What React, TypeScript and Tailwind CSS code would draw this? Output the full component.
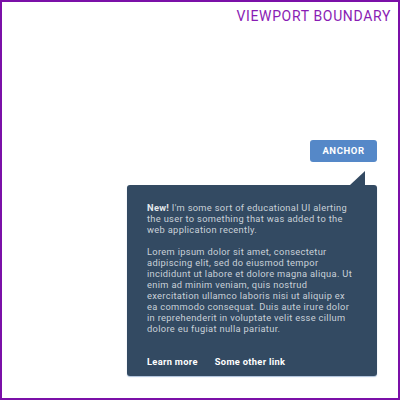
export default function App() {
  return (
    <div
      className="flex h-[400px] w-[400px] flex-col border-2 border-[#7b10a8] bg-white"
      style={{ fontFamily: "Roboto, 'Noto Sans', sans-serif" }}
    >
      {/* Viewport label */}
      <div className="mt-[4px] flex justify-end pr-[7px]">
        <span className="text-[14px] leading-[20px] tracking-[0.65px] text-[#8a1cb4]">VIEWPORT BOUNDARY</span>
      </div>

      {/* Anchor + popover */}
      <div className="mr-[21px] mt-[114px] flex flex-col items-end">
        <button className="h-[22px] w-[67px] rounded-[3px] bg-[#5588c8] text-[9.5px] font-bold tracking-[0.6px] text-white">
          ANCHOR
        </button>

        <div className="mt-[9px] flex w-[250px] flex-col items-end">
          <svg width="15" height="14" viewBox="0 0 15 14" className="mr-[12px] block">
            <path d="M0 14 L15 0 L15 14 Z" fill="#334a62" />
          </svg>
          <div className="w-[250px] rounded-[3px] bg-[#334a62] px-[20px] pb-[9px] pt-[17px] text-[9.3px] leading-[11px] tracking-[0.32px] text-[#c9d1d9] shadow-[0_1px_1px_rgba(90,130,180,0.5)]">
            <p>
              <span className="font-bold text-[#e4e8ec]">New!</span> I'm some sort of educational UI alerting the
              user to something that was added to the web application recently.
            </p>
            <p className="mt-[11px]">
              Lorem ipsum dolor sit amet, consectetur adipiscing elit, sed do eiusmod tempor incididunt ut labore et
              dolore magna aliqua. Ut enim ad minim veniam, quis nostrud exercitation ullamco laboris nisi ut aliquip
              ex ea commodo consequat. Duis aute irure dolor in reprehenderit in voluptate velit esse cillum dolore eu
              fugiat nulla pariatur.
            </p>
            <div className="mt-[22px] flex gap-[17px] font-bold text-white">
              <a href="#">Learn more</a>
              <a href="#">Some other link</a>
            </div>
          </div>
        </div>
      </div>
    </div>
  );
}
